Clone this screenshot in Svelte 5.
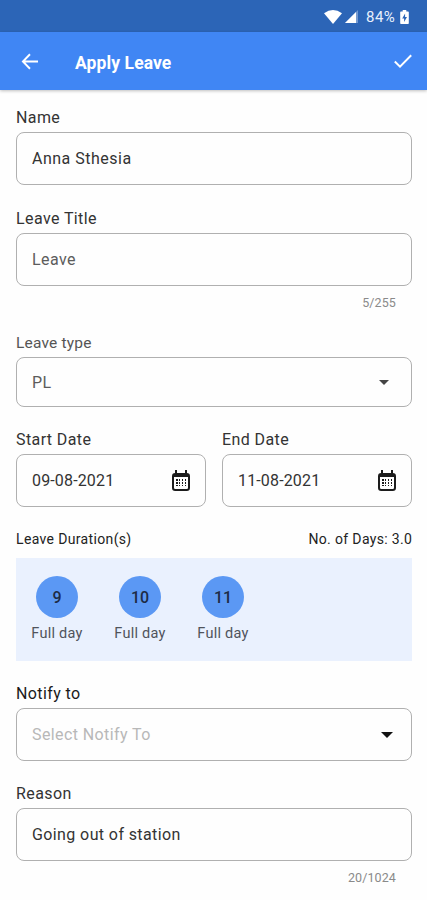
<script lang="ts">
  let name = $state("Anna Sthesia");
  let title = $state("Leave");
  let reason = $state("Going out of station");

  const leaveType = "PL";
  const dates = [
    { label: "Start Date", value: "09-08-2021" },
    { label: "End Date", value: "11-08-2021" },
  ];
  const days = [
    { day: 9, duration: "Full day" },
    { day: 10, duration: "Full day" },
    { day: 11, duration: "Full day" },
  ];

  let total = $derived(days.length.toFixed(1));
</script>

{#snippet calendar()}
  <svg class="calendar" viewBox="0 0 20 22" aria-hidden="true">
    <rect class="frame" x="2" y="4" width="16" height="16" rx="2.200" />
    <path d="M2 4h16v3H2zM4 0h2v4H4zM14 0h2v4h-2z" />
    <path
      d="M5 9h2v2H5zM8 9h1v2H8zM11 9h1v2h-1zM14 9h1v2h-1zM5 12h2v2H5zM8 12h1v2H8zM11 12h1v2h-1zM14 12h1v2h-1zM5 15h2v1H5zM8 15h1v1H8zM11 15h1v1h-1zM14 15h1v1h-1z"
    />
  </svg>
{/snippet}

<div class="screen">
  <div class="status-bar">
    <svg class="wifi" viewBox="0 0 18 14" aria-hidden="true">
      <path d="M0 3.200Q9-3.200 18 3.200L9 14Z" />
    </svg>
    <svg class="signal" viewBox="0 0 13 13" aria-hidden="true">
      <path d="M13 0v13H0Z" opacity="0.35" />
      <path d="M11 2V13H0Z" />
    </svg>
    <span class="battery-level">84%</span>
    <svg class="battery" viewBox="0 0 9 14" aria-hidden="true">
      <path
        d="M2.700 0h3.600v1.500H8q.8 0 .8.800v10.900q0 .8-.8.800H1q-.8 0-.8-.8V2.300q0-.8.800-.8h1.700ZM5.100 3.500 2.200 8.400h1.900v3.600l2.900-5H5.100Z"
        fill-rule="evenodd"
      />
    </svg>
  </div>

  <header class="app-bar">
    <button class="icon-btn" type="button" aria-label="Back">
      <svg class="back" viewBox="0 0 18 18" aria-hidden="true">
        <path d="M17.500 9H1.600M9 1.300 1.500 9 9 16.700" />
      </svg>
    </button>
    <h1>Apply Leave</h1>
    <button class="icon-btn" type="button" aria-label="Apply">
      <svg class="check" viewBox="0 0 18 14" aria-hidden="true">
        <path d="M.8 7.500 6 12.600 17.200 1.200" />
      </svg>
    </button>
  </header>

  <form class="form">
    <div class="field">
      <label for="name">Name</label>
      <input id="name" class="box name" bind:value={name} />
    </div>

    <div class="field">
      <label for="title">Leave Title</label>
      <input id="title" class="box muted" bind:value={title} />
      <span class="counter">{title.length}/255</span>
    </div>

    <div class="field">
      <span class="label soft">Leave type</span>
      <button class="box select" type="button">
        <span class="muted">{leaveType}</span>
        <svg class="caret small" viewBox="0 0 12 6" aria-hidden="true">
          <path d="M0 0h12L6 6Z" />
        </svg>
      </button>
    </div>

    <div class="dates">
      {#each dates as date (date.label)}
        <div class="field">
          <span class="label">{date.label}</span>
          <button class="box date" type="button">
            <span>{date.value}</span>
            {@render calendar()}
          </button>
        </div>
      {/each}
    </div>

    <section class="durations">
      <div class="summary">
        <span>Leave Duration(s)</span>
        <span class="total">No. of Days: {total}</span>
      </div>
      <div class="days">
        {#each days as item (item.day)}
          <div class="day">
            <span class="bubble">{item.day}</span>
            <span class="duration">{item.duration}</span>
          </div>
        {/each}
      </div>
    </section>

    <div class="field">
      <span class="label dark">Notify to</span>
      <button class="box notify" type="button">
        <span class="placeholder">Select Notify To</span>
        <svg class="caret" viewBox="0 0 12 6" aria-hidden="true">
          <path d="M0 0h12L6 6Z" />
        </svg>
      </button>
    </div>

    <div class="field">
      <label for="reason">Reason</label>
      <input id="reason" class="box" bind:value={reason} />
      <span class="counter">{reason.length}/1024</span>
    </div>
  </form>
</div>

<style>
  :global(body) {
    background: #fefefe;
  }

  .screen {
    height: 900px;
    overflow: hidden;
    background: #fefefe;
    color: #333;
    font-family: Roboto, "Liberation Sans", sans-serif;
    font-size: 16px;
  }

  .status-bar {
    display: flex;
    align-items: center;
    justify-content: flex-end;
    height: 32px;
    padding: 1px 18px 0 0;
    box-sizing: border-box;
    background: #2c65b7;
    color: #e8f0fc;
    fill: #fff;
  }

  .wifi {
    width: 18px;
    height: 14px;
    margin-right: 3px;
  }

  .signal {
    width: 13px;
    height: 13px;
    margin-right: 8px;
  }

  .battery-level {
    width: 34px;
    font-size: 15px;
    letter-spacing: 0.5px;
  }

  .battery {
    width: 9px;
    height: 14px;
  }

  .app-bar {
    display: flex;
    align-items: center;
    height: 58px;
    padding: 0 15px 0 21px;
    background: #4086f4;
    color: #fff;
    box-shadow: 0 1px 3px rgba(0, 0, 0, 0.25);
  }

  h1 {
    flex: 1;
    margin: 3px 0 0 36px;
    font-size: 17.500px;
    font-weight: 700;
    line-height: 24px;
    letter-spacing: 0.1px;
  }

  .icon-btn {
    display: flex;
    padding: 0;
    border: none;
    background: none;
    color: inherit;
    cursor: pointer;
  }

  .icon-btn path {
    fill: none;
    stroke: currentColor;
    stroke-width: 2;
  }

  .back {
    width: 18px;
    height: 17px;
  }

  .check {
    width: 18px;
    height: 14px;
  }

  .form {
    display: flex;
    flex-direction: column;
    gap: 22px;
    padding: 17px 15px 0 16px;
  }

  .field {
    display: flex;
    flex-direction: column;
    min-width: 0;
  }

  label,
  .label {
    margin-bottom: 3px;
    font-size: 16px;
    line-height: 22px;
    letter-spacing: 0.4px;
  }

  .label.soft {
    margin-bottom: 4px;
    color: #555;
    font-size: 15.500px;
    line-height: 20px;
    letter-spacing: 0.2px;
  }

  .label.dark {
    color: #1a1a1a;
  }

  .box {
    display: flex;
    align-items: center;
    justify-content: space-between;
    width: 100%;
    height: 53px;
    padding: 0 15px;
    box-sizing: border-box;
    border: 1px solid #b0b0b0;
    border-radius: 8px;
    outline: none;
    background: transparent;
    color: #333;
    font: inherit;
    letter-spacing: 0.4px;
    text-align: left;
  }

  .box.name {
    margin-bottom: 1px;
    letter-spacing: 0.5px;
  }

  .box.select {
    height: 50px;
    padding-right: 22px;
  }

  .box.notify {
    padding-right: 18px;
  }

  .box.muted,
  .muted {
    color: #5c5c5c;
  }

  .placeholder {
    color: #b8b8b8;
  }

  .counter {
    align-self: flex-end;
    margin: 9px 16px 0 0;
    color: #8a8a8a;
    font-size: 12.500px;
    line-height: 16px;
    letter-spacing: 0.1px;
  }

  .caret {
    width: 12px;
    height: 6px;
    fill: #111;
  }

  .caret.small {
    width: 10px;
    height: 5px;
    fill: #444;
  }

  .dates {
    display: grid;
    grid-template-columns: 1fr 1fr;
    gap: 16px;
  }

  .box.date {
    padding-right: 14px;
    letter-spacing: 0.15px;
  }

  .calendar {
    width: 20px;
    height: 22px;
    fill: #1c1c1c;
  }

  .frame {
    fill: none;
    stroke: #1c1c1c;
    stroke-width: 2;
  }

  .durations {
    margin-top: 1px;
  }

  .summary {
    display: flex;
    justify-content: space-between;
    margin-bottom: 10px;
    color: #222;
    font-size: 14px;
    line-height: 18px;
    letter-spacing: 0.35px;
  }

  .total {
    margin-right: -0.35px;
  }

  .days {
    display: flex;
    gap: 31px;
    height: 103px;
    padding: 18px 15px 0;
    box-sizing: border-box;
    background: #eaf1fe;
  }

  .day {
    display: flex;
    flex-direction: column;
    align-items: center;
    width: 52px;
  }

  .bubble {
    display: flex;
    align-items: center;
    justify-content: center;
    width: 42px;
    height: 42px;
    border-radius: 50%;
    background: #5b98f4;
    color: #1d2b45;
    font-weight: 500;
  }

  .duration {
    margin-top: 7px;
    color: #50545c;
    font-size: 14.500px;
    line-height: 18px;
    letter-spacing: 0.25px;
    white-space: nowrap;
  }
</style>
